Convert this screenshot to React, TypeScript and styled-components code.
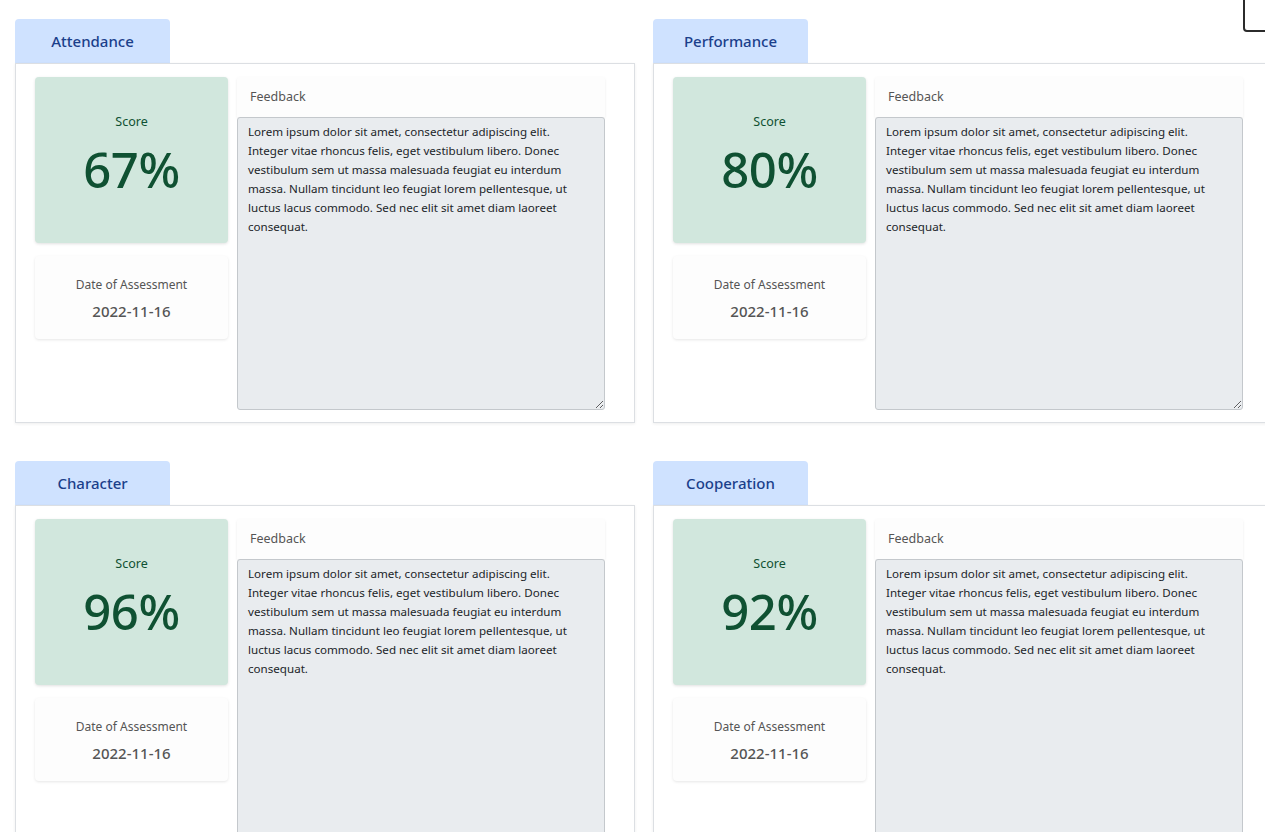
import React from "react";
import styled, { createGlobalStyle } from "styled-components";

const GlobalStyle = createGlobalStyle`
  html, body {
    margin: 0;
    padding: 0;
    overflow: hidden;
    background: #ffffff;
  }
  body {
    font-family: "Noto Sans", "Open Sans", sans-serif;
    color: #212529;
  }
  * { box-sizing: border-box; }
`;

const Page = styled.div`
  position: relative;
  display: grid;
  grid-template-columns: 620px 621px;
  column-gap: 18px;
  row-gap: 38px;
  padding: 19px 0 0 15px;
  width: 1300px;
`;

const CornerButton = styled.div`
  position: absolute;
  top: -6px;
  left: 1243px;
  width: 60px;
  height: 38px;
  border: 2px solid #2b2b2b;
  border-radius: 4px;
  background: #fff;
`;

const Section = styled.section`
  display: flex;
  flex-direction: column;
`;

const Tab = styled.div`
  width: 155px;
  height: 44px;
  display: flex;
  align-items: center;
  justify-content: center;
  background: #cfe2ff;
  border-radius: 4px 4px 0 0;
  color: #1b3f8b;
  font-size: 15px;
  font-weight: 500;
`;

const Card = styled.div`
  height: 360px;
  border: 1px solid #dcdfe3;
  box-shadow: 0 1px 3px rgba(0, 0, 0, 0.07);
  padding: 13px 29px 12px 19px;
  display: grid;
  grid-template-columns: 193px 368px;
  column-gap: 9px;
  align-items: start;
`;

const LeftCol = styled.div`
  display: flex;
  flex-direction: column;
  gap: 13px;
`;

const ScoreBox = styled.div`
  height: 166px;
  background: #d1e7dd;
  border-radius: 4px;
  box-shadow: 0 1px 3px rgba(0, 0, 0, 0.12);
  display: flex;
  flex-direction: column;
  align-items: center;
  padding-top: 36px;
  color: #0f5132;
`;

const ScoreLabel = styled.div`
  font-size: 12.5px;
  line-height: 18px;
`;

const ScoreValue = styled.div`
  margin-top: 7px;
  font-size: 49px;
  font-weight: 500;
  line-height: 62px;
  color: #0f5132;
  letter-spacing: -0.5px;
`;

const DateBox = styled.div`
  height: 83px;
  background: #fdfdfd;
  border-radius: 4px;
  box-shadow: 0 1px 3px rgba(0, 0, 0, 0.1);
  display: flex;
  flex-direction: column;
  align-items: center;
  padding-top: 20px;
  color: #555;
`;

const DateLabel = styled.div`
  font-size: 12px;
  line-height: 18px;
`;

const DateValue = styled.div`
  margin-top: 7px;
  font-size: 15px;
  font-weight: 500;
  line-height: 20px;
`;

const RightCol = styled.div`
  display: flex;
  flex-direction: column;
`;

const FeedbackHeader = styled.div`
  height: 40px;
  display: flex;
  align-items: center;
  padding: 0 0 2px 13px;
  background: #fdfdfd;
  box-shadow: 0 1px 3px rgba(0, 0, 0, 0.08);
  border-radius: 3px 3px 0 0;
  font-size: 12.5px;
  color: #555;
`;

const Feedback = styled.textarea`
  display: block;
  width: 368px;
  height: 293px;
  margin: 0;
  padding: 4px 10px;
  background: #e9ecef;
  border: 1px solid #c4c8cc;
  border-radius: 3px;
  font-family: "Noto Sans", "Open Sans", sans-serif;
  font-size: 11.6px;
  line-height: 19px;
  color: #212529;
  resize: both;
  overflow: hidden;
  white-space: pre-wrap;
  outline: none;
`;

const LOREM = [
  "Lorem ipsum dolor sit amet, consectetur adipiscing elit.",
  "Integer vitae rhoncus felis, eget vestibulum libero. Donec",
  "vestibulum sem ut massa malesuada feugiat eu interdum",
  "massa. Nullam tincidunt leo feugiat lorem pellentesque, ut",
  "luctus lacus commodo. Sed nec elit sit amet diam laoreet",
  "consequat.",
].join("\n");

type Item = { title: string; score: number; date: string };

const items: Item[] = [
  { title: "Attendance", score: 67, date: "2022-11-16" },
  { title: "Performance", score: 80, date: "2022-11-16" },
  { title: "Character", score: 96, date: "2022-11-16" },
  { title: "Cooperation", score: 92, date: "2022-11-16" },
];

function AssessmentCard({ item }: { item: Item }) {
  return (
    <Section>
      <Tab>{item.title}</Tab>
      <Card>
        <LeftCol>
          <ScoreBox>
            <ScoreLabel>Score</ScoreLabel>
            <ScoreValue>{item.score}%</ScoreValue>
          </ScoreBox>
          <DateBox>
            <DateLabel>Date of Assessment</DateLabel>
            <DateValue>{item.date}</DateValue>
          </DateBox>
        </LeftCol>
        <RightCol>
          <FeedbackHeader>Feedback</FeedbackHeader>
          <Feedback readOnly defaultValue={LOREM} />
        </RightCol>
      </Card>
    </Section>
  );
}

export default function App() {
  return (
    <>
      <GlobalStyle />
      <Page>
        <CornerButton />
        {items.map((it) => (
          <AssessmentCard key={it.title} item={it} />
        ))}
      </Page>
    </>
  );
}
